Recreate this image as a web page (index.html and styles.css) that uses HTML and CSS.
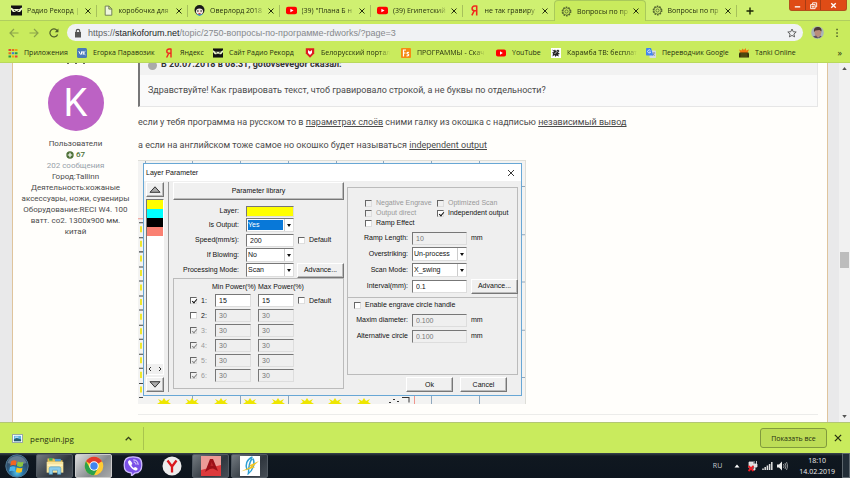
FILE: index.html
```html
<!DOCTYPE html>
<html lang="ru">
<head>
<meta charset="utf-8">
<title>Вопросы по программе RDWorks</title>
<link rel="stylesheet" href="styles.css">
</head>
<body>
<svg class="defs" width="0" height="0" aria-hidden="true">
  <symbol id="record" viewBox="0 0 11 10"><rect width="11" height="10" fill="#111"/><path d="M0 2l2.500 1.500h6L11 2v2L9 6.500H7.500L5.500 5.500 3.500 6.500H2L0 4z" fill="#eef8cf"/><path d="M2.500 4l2.200.8-1.200.8zM8.500 4l-2.200.8 1.200.8z" fill="#111"/></symbol>
  <symbol id="youtube" viewBox="0 0 10 10"><rect y="1.500" width="10" height="7" rx="1.800" fill="#f00"/><path d="M4 3.300v3.400L6.800 5z" fill="#fff"/></symbol>
  <symbol id="yandex" viewBox="0 0 10 10"><path d="M7 .5v9M7 1H5.200C3.300 1 2.800 2.300 2.800 3.200c0 1.300.9 2 2.200 2H7M4.800 5.200L2.600 9.500" fill="none" stroke="#f0281e" stroke-width="1.400"/></symbol>
  <symbol id="gear" viewBox="0 0 12 12"><circle cx="6" cy="6" r="4.600" fill="none" stroke="#54652f" stroke-width="1.500" stroke-dasharray="1.800 1.090"/><circle cx="6" cy="6" r="3.900" fill="none" stroke="#54652f" stroke-width=".8"/><circle cx="6" cy="6" r="1.700" fill="none" stroke="#54652f" stroke-width=".9"/></symbol>
  <symbol id="x" viewBox="0 0 8 8"><path d="M1.500 1.500l5 5M6.500 1.500l-5 5" fill="none" stroke="currentColor" stroke-width="1"/></symbol>
</svg>

<header class="browser">
  <nav class="tabs">
    <div class="tab"><svg class="fav"><use href="#record"/></svg><a href="#">Радио Рекорд |</a><button aria-label="Закрыть"><svg><use href="#x"/></svg></button></div>
    <div class="tab"><svg class="fav" viewBox="0 0 10 10"><path d="M2 1h3.500L8 3.500V9.300H2zM5.300 1v2.700H8" fill="#eef6dc" stroke="#687452" stroke-width=".8"/></svg><a href="#">коробочка для</a><button aria-label="Закрыть"><svg><use href="#x"/></svg></button></div>
    <div class="tab"><svg class="fav" viewBox="0 0 11 11"><circle cx="5.500" cy="5" r="5" fill="#181818"/><ellipse cx="5.500" cy="6.400" rx="3.600" ry="3" fill="#f4e5dc"/><circle cx="3.900" cy="6" r=".7"/><circle cx="7.100" cy="6" r=".7"/><path d="M2 9.500l3.500-1 3.500 1-3.500 1.500z" fill="#3697c4"/><path d="M4.500 8h2v1.500h-2z" fill="#db3d3d"/></svg><a href="#">Оверлорд 2018</a><button aria-label="Закрыть"><svg><use href="#x"/></svg></button></div>
    <div class="tab"><svg class="fav"><use href="#youtube"/></svg><a href="#">(39) "Плана Б н</a><button aria-label="Закрыть"><svg><use href="#x"/></svg></button></div>
    <div class="tab"><svg class="fav"><use href="#youtube"/></svg><a href="#">(39) Египетский</a><button aria-label="Закрыть"><svg><use href="#x"/></svg></button></div>
    <div class="tab plain"><svg class="fav"><use href="#yandex"/></svg><a href="#">не так гравиру</a><button aria-label="Закрыть"><svg><use href="#x"/></svg></button></div>
    <div class="tab active"><svg class="fav"><use href="#gear"/></svg><a href="#">Вопросы по пр</a><button aria-label="Закрыть"><svg><use href="#x"/></svg></button></div>
    <div class="tab"><svg class="fav"><use href="#gear"/></svg><a href="#">Вопросы по пр</a><button aria-label="Закрыть"><svg><use href="#x"/></svg></button></div>
    <button class="new-tab" aria-label="Новая вкладка"><svg viewBox="0 0 8 8"><path d="M4 .5v7M.5 4h7" stroke="#1b2406" stroke-width="1.400"/></svg></button>
    <div class="win">
      <button aria-label="Свернуть"><svg viewBox="0 0 10 10"><path d="M2 6.500h6" stroke="#fff" stroke-width="1.500"/></svg></button>
      <button aria-label="Восстановить"><svg viewBox="0 0 10 10"><path d="M4 3.500V2h4.500v4.500H7M1.800 4h5v4.500h-5zM3.500 5.800h1.700v1H3.500z" fill="none" stroke="#fff"/></svg></button>
      <button aria-label="Закрыть окно"><svg viewBox="0 0 10 10"><path d="M2.500 2.500l5 5M7.500 2.500l-5 5" stroke="#fff" stroke-width="1.500"/></svg></button>
    </div>
  </nav>

  <div class="toolbar">
    <button aria-label="Назад"><svg class="dim" viewBox="0 0 10 10"><path d="M9.500 5H1.200M5 1L1 5l4 4"/></svg></button>
    <button aria-label="Вперёд"><svg class="dim" viewBox="0 0 10 10"><path d="M.5 5h8.300M5 1l4 4-4 4"/></svg></button>
    <button aria-label="Обновить"><svg viewBox="0 0 10 10"><path d="M8.600 6.500A4 4 0 1 1 8 2.400L9 3.500"/><path d="M9.400.6v3.600H5.800z" fill="#4c5c28" stroke="none"/></svg></button>
    <div class="omnibox">
      <svg viewBox="0 0 10 10"><path d="M2 4h6v5.500H2z" fill="#555"/><path d="M3.300 4.500V3a1.700 1.700 0 0 1 3.400 0v1.500" fill="none" stroke="#555"/></svg>
      <div class="url" role="textbox" aria-label="Адрес"><span>https://</span><b>stankoforum.net</b>/topic/2750-вопросы-по-программе-rdworks/?page=3</div>
      <button aria-label="Закладка"><svg viewBox="0 0 10 10"><path d="M5 1l1.200 2.700 3 .3-2.300 2 .7 2.900L5 7.400 2.400 8.900 3.100 6 .8 4l3-.3z" fill="none" stroke="#555" stroke-width=".9"/></svg></button>
    </div>
    <button class="person" aria-label="Профиль"><svg viewBox="0 0 13 13"><circle cx="6.500" cy="6.500" r="6.300" fill="#a9b4b9"/><path d="M3 3.500C4 .5 9 .5 10 3.500l.3 3-1 3.500-3 1.500L4 9z" fill="#b98d7a"/><path d="M3 6C2.500 2 4.500 1 7 1s4 2 3.500 4.500L8.500 4l-4 .5z" fill="#4c3a38"/><path d="M2 10.500l3-1 2 2.300 2.500-2 1.200.7a6.300 6.300 0 0 1-8.700 0z" fill="#5b4c5c"/></svg></button>
    <button class="more" aria-label="Меню"><svg viewBox="0 0 10 10"><path d="M4.300.8h1.500v1.500H4.300zM4.300 4.200h1.500v1.500H4.300zM4.300 7.600h1.500v1.500H4.300z" fill="#4c5c28" stroke="none"/></svg></button>
  </div>

  <nav class="bookmarks">
    <a href="#"><svg viewBox="0 0 10 10"><path d="M.5 1H3v2H.5zM7 7.500h2.500v2H7z" fill="#e94335"/><path d="M3.800 1h2.500v2H3.800zM.5 4.200H3v2H.5z" fill="#e56d1f"/><path d="M7 1h2.500v2H7zM3.800 7.500h2.500v2H3.800z" fill="#efa20c"/><path d="M3.800 4.200h2.500v2H3.800z" fill="#3b77dc"/><path d="M7 4.200h2.500v2H7zM.5 7.500H3v2H.5z" fill="#269a4a"/></svg><span>Приложения</span></a>
    <a href="#"><svg viewBox="0 0 10 10"><rect width="10" height="10" rx="1.500" fill="#4a7ab8"/><path d="M1.800 3.200l1.500 3h1.200V3.400M4.500 4.800C5.500 4.800 6 3.200 6 3.200M6.200 3.300v3.500M8.400 3.300L6.400 5l2 1.800" fill="none" stroke="#fff" stroke-width="1"/></svg><span>Егорка Паравозик</span></a>
    <a href="#"><svg><use href="#yandex"/></svg><span>Яндекс</span></a>
    <a href="#"><svg><use href="#record"/></svg><span>Сайт Радио Рекорд</span></a>
    <a href="#"><svg viewBox="0 0 10 10"><path d="M.8.3h8.400v5.200L5 9.800.8 5.500z" fill="#df1b22"/><path d="M3 2v3l2 2 2-2V2L5 3.500z" fill="#fff"/></svg><span class="fade">Белорусский портал</span></a>
    <a href="#"><svg viewBox="0 0 10 10"><rect width="10" height="10" rx="1" fill="#f58a13"/><path d="M2.500 8.500V2H5M2.500 5h2M8 4.500C6 3.800 5.300 5.500 6.800 6s1 2-1.300 1.800" fill="none" stroke="#fff" stroke-width="1.200"/></svg><span class="fade">ПРОГРАММЫ - Скач</span></a>
    <a href="#"><svg><use href="#youtube"/></svg><span>YouTube</span></a>
    <a href="#"><svg viewBox="0 0 10 10"><rect width="10" height="10" fill="#fff"/><path d="M1 1.500l2 1 1-1 1 1.500 2-1.500L8.500 3 7 4.500 9 6 7 6.500l1 2-2.500-1-1 1.500-1-2-2 1.500.5-3L1 4.500l2-.5z" fill="#262626"/><path d="M3.500 6l3-3" stroke="#fff" stroke-width=".7"/></svg><span class="fade">Карамба ТВ: бесплат</span></a>
    <a href="#"><svg viewBox="0 0 10 10"><rect x="3.500" y="2.500" width="6.500" height="7.500" rx=".7" fill="#d7dce4"/><path d="M0 .7Q0 0 .7 0H5l2.300 7.500H.7Q0 7.500 0 6.800z" fill="#4385ef"/><path d="M4.500 2.700A1.500 1.500 0 1 0 4.600 4H3.300" fill="none" stroke="#fff" stroke-width=".8"/><path d="M6.700 5h2.500M8 4.300V5c0 1-.5 2-1.200 2.500M7.200 6l1.500 1.800" fill="none" stroke="#68738b" stroke-width=".6"/></svg><span>Переводчик Google</span></a>
    <a href="#"><svg viewBox="0 0 10 10"><path d="M0 1.500l2.500 1L3.500.5 5 2 7 0v2.500L10 1.500 8.500 5h-7z" fill="#ef7811"/><path d="M.5 4.500h9L10 6v3.500H0V6z" fill="#352f0b"/><path d="M1.500 6h7M1.500 8h7" stroke="#82871f" stroke-width=".6"/></svg><span>Tanki Online</span></a>
    <button aria-label="Другие закладки">»</button>
  </nav>
</header>

<main class="viewport">
  <article class="post">
    <aside class="author">
      <div class="name-tail"><i></i><i></i><i></i></div>
      <div class="avatar">K</div>
      <p>Пользователи</p>
      <p class="rep"><svg viewBox="0 0 8 8"><circle cx="4" cy="4" r="3.700" fill="#4d7037"/><path d="M4 1.800v4.400M1.800 4h4.400" stroke="#fff" stroke-width="1.200"/></svg>67</p>
      <p class="count">202 сообщения</p>
      <p>Город:Tallinn</p>
      <p>Деятельность:кожаные аксессуары, ножи, сувениры</p>
      <p>Оборудование:RECI W4. 100 ватт. co2. 1300x900 мм. китай</p>
    </aside>
    <section class="message">
      <blockquote>
        <div class="quote-head"><span class="dot"></span><b>В 20.07.2018 в 08:31, gotovsevegor сказал:</b></div>
        <p>Здравствуйте! Как гравировать текст, чтоб гравировало строкой, а не буквы по отдельности?</p>
      </blockquote>
      <p>если у тебя программа на русском то в <u>параметрах слоёв</u> сними галку из окошка с надписью <u>независимый вывод</u></p>
      <p>а если на английском тоже самое но окошко будет называться <u>independent output</u></p>

      <figure>
        <svg class="canvas" viewBox="0 0 388 243" preserveAspectRatio="none" aria-hidden="true">
          <rect width="388" height="243" fill="#f3f3f2"/>
          <path d="M0 .5h388M387.500 0v243" stroke="#deded8"/>
          <path d="M7.500 1v3M54.500 1v3M102.500 1v3M150.500 1v3M198.500 1v3M245.500 1v3M293.500 1v3M341.500 1v3M384 26.500h3M384 74.500h3M384 121.500h3M384 169.500h3M384 216.500h3M293.500 235v8M341.500 235v8M54.500 235v8M102.500 235v8M150.500 235v8" stroke="#8fa8be"/>
          <path d="M0 58.500h5M276.500 235v8" stroke="#ef958d"/>
          <path d="M1 62.500h4M1 77.500h4M1 91.500h4M1 106.500h4M1 120.500h4M1 135.500h4M1 149.500h4M1 164.500h4M1 178.500h4M1 193.500h4M1 207.500h4M1 222.500h4M1 236.500h4" stroke="#43484a"/>
          <path d="M3 66v170" stroke="#eee72d" stroke-width="2" stroke-dasharray="6 8.500"/>
          <path id="spark" d="M20 238l4 2 2-3 2 3 4-2-2 3 3 2H19l3-2z" fill="#eee600"/>
          <use href="#spark" x="28"/><use href="#spark" x="57"/><use href="#spark" x="86"/><use href="#spark" x="114"/><use href="#spark" x="143"/><use href="#spark" x="171"/><use href="#spark" x="200"/>
          <path d="M251 241.500h2M255 238.500h2M259 240.500h2M264 236.500h7v5" fill="none" stroke="#333"/>
        </svg>

        <form class="dialog">
          <div class="title"><span>Layer Parameter</span><button type="button" aria-label="Close"><svg viewBox="0 0 8 8"><path d="M1 1l6 6M7 1L1 7" stroke="#222" stroke-width=".9"/></svg></button></div>
          <div class="work">
            <div class="strip">
              <button type="button" class="btn" aria-label="Up"><svg viewBox="0 0 12 7"><path d="M1 6.300L6 .8l5 5.500z" fill="#aaa" stroke="#222" stroke-width=".9"/></svg></button>
              <div class="layers"><i class="yellow"></i><i class="cyan"></i><i class="black"></i><i class="salmon"></i><span class="arrows"><svg viewBox="0 0 16 6"><path d="M4 1L2 3l2 2M12 1l2 2-2 2" fill="none" stroke="#333"/></svg></span></div>
              <button type="button" class="btn" aria-label="Down"><svg viewBox="0 0 12 7"><path d="M1 .7L6 6.200 11 .7z" fill="#aaa" stroke="#222" stroke-width=".9"/></svg></button>
            </div>
            <div class="left">
              <button type="button" class="btn library">Parameter library</button>
              <div class="basic">
                <label>Layer:</label><span class="swatch"></span><span></span>
                <label for="out">Is Output:</label><span class="combo"><select id="out" class="picked"><option>Yes</option></select></span><span></span>
                <label for="speed">Speed(mm/s):</label><input id="speed" type="text" value="200"><label class="check"><input type="checkbox">Default</label>
                <label for="blow">If Blowing:</label><span class="combo"><select id="blow"><option>No</option></select></span><span></span>
                <label for="mode">Processing Mode:</label><span class="combo"><select id="mode"><option>Scan</option></select></span><button type="button" class="btn">Advance...</button>
              </div>
              <div class="power">
                <span></span><span class="head">Min Power(%)</span><span class="head">Max Power(%)</span><span></span>
                <label class="check"><input type="checkbox" checked>1:</label><input type="text" value="15" aria-label="Min 1"><input type="text" value="15" aria-label="Max 1"><label class="check"><input type="checkbox">Default</label>
                <label class="check"><input type="checkbox">2:</label><input type="text" value="30" disabled aria-label="Min 2"><input type="text" value="30" disabled aria-label="Max 2"><span></span>
                <label class="check off"><input type="checkbox" checked disabled>3:</label><input type="text" value="30" disabled aria-label="Min 3"><input type="text" value="30" disabled aria-label="Max 3"><span></span>
                <label class="check off"><input type="checkbox" checked disabled>4:</label><input type="text" value="30" disabled aria-label="Min 4"><input type="text" value="30" disabled aria-label="Max 4"><span></span>
                <label class="check off"><input type="checkbox" checked disabled>5:</label><input type="text" value="30" disabled aria-label="Min 5"><input type="text" value="30" disabled aria-label="Max 5"><span></span>
                <label class="check off"><input type="checkbox" checked disabled>6:</label><input type="text" value="30" disabled aria-label="Min 6"><input type="text" value="30" disabled aria-label="Max 6"><span></span>
              </div>
            </div>
            <div class="right">
              <div class="options">
                <div class="flags">
                  <label class="check off"><input type="checkbox" disabled>Negative Engrave</label><label class="check off"><input type="checkbox" disabled>Optimized Scan</label>
                  <label class="check off"><input type="checkbox" disabled>Output direct</label><label class="check"><input type="checkbox" checked>Independent output</label>
                  <label class="check"><input type="checkbox">Ramp Effect</label>
                </div>
                <div class="fields">
                  <label for="ramp">Ramp Length:</label><input id="ramp" type="text" value="10" disabled><span>mm</span>
                  <label for="over">Overstriking:</label><span class="combo"><select id="over"><option>Un-process</option></select></span><span></span>
                  <label for="scan">Scan Mode:</label><span class="combo"><select id="scan"><option>X_swing</option></select></span><span></span>
                  <label for="interval">Interval(mm):</label><input id="interval" type="text" value="0.1"><button type="button" class="btn">Advance...</button>
                </div>
                <div class="circle">
                  <label class="check"><input type="checkbox">Enable engrave circle handle</label>
                  <div class="fields">
                    <label for="maxd">Maxim diameter:</label><input id="maxd" type="text" value="0.100" disabled><span>mm</span>
                    <label for="alt">Alternative circle</label><input id="alt" type="text" value="0.100" disabled><span>mm</span>
                  </div>
                </div>
              </div>
              <div class="actions"><button type="button" class="btn">Ok</button><button type="button" class="btn">Cancel</button></div>
            </div>
          </div>
        </form>
      </figure>
      <hr>
    </section>
  </article>
  <div class="scrollbar"><svg viewBox="0 0 6 4"><path d="M0 4l3-4 3 4z" fill="#555"/></svg><span class="thumb"></span><svg viewBox="0 0 6 4"><path d="M0 0l3 4 3-4z" fill="#555"/></svg></div>
</main>

<footer class="downloads">
  <div class="file"><svg viewBox="0 0 12 10"><rect x=".5" y=".5" width="11" height="9" fill="#fff" stroke="#91a1a6"/><path d="M2 2h8v6H2z" fill="#5ab2e4"/><path d="M2 6l3-1.500L10 6v2H2z" fill="#265d70"/><path d="M3 3h4v1H3z" fill="#eef"/></svg><a href="#">penguin.jpg</a><button aria-label="Действия"><svg viewBox="0 0 8 8"><path d="M1.500 5.500L4 3l2.500 2.500" fill="none" stroke="#34411a" stroke-width="1.200"/></svg></button></div>
  <button class="show-all">Показать все</button>
  <button class="close" aria-label="Закрыть панель"><svg><use href="#x"/></svg></button>
</footer>

<nav class="taskbar">
  <button aria-label="Пуск"><svg viewBox="0 0 24 24"><defs><radialGradient id="orb" cy=".8"><stop stop-color="#55c4e8"/><stop offset=".6" stop-color="#256b9c"/><stop offset="1" stop-color="#31506c"/></radialGradient></defs><circle cx="12" cy="12" r="11.200" fill="url(#orb)" stroke="#4e7893"/><path d="M2.500 9A10 10 0 0 1 21.500 9Q12 12 2.500 9z" fill="#fff" opacity=".25"/><path d="M6 7.500q3-2 5.500-.5l-.8 4.600q-2.600-1.400-5.400.2z" fill="#f26522"/><path d="M12.700 7.500q2.600 1.500 5.800.2l-.8 4.600q-3 1.300-5.800-.2z" fill="#8cc63f"/><path d="M5 13q2.800-1.600 5.500-.2l-.8 4.600q-2.700-1.500-5.500 0z" fill="#4ab4ee"/><path d="M11.700 13.500q2.800 1.500 5.800.2l-.8 4.400q-3 1.300-5.800-.2z" fill="#fdc51a"/></svg></button>
  <button class="open" aria-label="Проводник"><svg viewBox="0 0 24 22"><path d="M3 2h8l1.500 2H21v14H3z" fill="#e3bb52"/><path d="M5 1.500h4v3H5z" fill="#3daa50"/><path d="M12 2.500h7v3h-7z" fill="#4e9ed8"/><path d="M2 6h20v13H2z" fill="#f8e49b"/><path d="M3 9h18v2H3z" fill="#fff3c2"/><path d="M5 21v-7q0-2 2-2h10q2 0 2 2v7h-4v-5H9v5z" fill="#8accea" stroke="#4b9ac5" stroke-width=".7"/></svg></button>
  <button class="open current" aria-label="Chrome"><svg viewBox="0 0 20 20"><circle cx="10" cy="10" r="9.300" fill="#fc3"/><path d="M10 10L1.950 5.350A9.300 9.300 0 0 1 18.050 5.350z" fill="#e33b2e"/><path d="M1.950 5.350A9.300 9.300 0 0 0 10 19.300L13.900 12.300 6.100 12.300z" fill="#2ba14b"/><circle cx="10" cy="10" r="4.700" fill="#fff"/><circle cx="10" cy="10" r="3.700" fill="#4284f0"/></svg></button>
  <button aria-label="Viber"><svg viewBox="0 0 20 20"><path d="M10 .8c6.500 0 8.800 2 8.800 8.200s-2.600 8-7 8.200L8.500 20v-3C3 16.300 1.200 14.500 1.200 9S3.500.8 10 .8z" fill="#7a51e8" stroke="#cdbcfc" stroke-width="1.300"/><path d="M6.300 4.300c-2 1-1.300 3 .2 5.200 1.800 2.700 3.500 4.200 5.800 5 1.200.3 2-.5 2.400-1.500.2-.8-2-2.200-2.800-2.100l-1 1c-1-.3-2.400-2-2.600-3l1-1c.2-.8-1.800-3.900-3-3.600z" fill="#fff"/><path d="M10.300 3.900c3.200 0 4.800 1.800 4.800 4.900M10.700 6c1.500.1 2.200 1 2.300 2.500" fill="none" stroke="#fff" stroke-width=".9"/></svg></button>
  <button aria-label="Яндекс"><svg viewBox="0 0 20 20"><circle cx="10" cy="10" r="9.500" fill="#ececec"/><path d="M5.500 4.500L10 10.500l4.500-6M10 10v6.500" fill="none" stroke="#d9181e" stroke-width="2.300"/></svg></button>
  <button class="open" aria-label="AutoCAD"><svg viewBox="0 0 20 20"><rect width="20" height="20" fill="#dd3a3c"/><path d="M0 0h20v9L0 14z" fill="#ed9a96"/><path d="M4 16L9 3h3l5 12-5-2.500-3 .5z" fill="#9c1018"/><path d="M9.500 10l1-4 2 4z" fill="#b9262b"/></svg></button>
  <button class="open" aria-label="RDWorks"><svg viewBox="0 0 20 20"><rect width="20" height="20" fill="#fff"/><path d="M12.500 1C6.500 3.500 5 9 7 14M13 2.500c2.500 5 0 12-5.500 16M12 2.500C9 7 8.500 11 8.500 17" fill="none" stroke="#2d9fd4" stroke-width="1.500"/><path d="M1 15.500L11 10.500l-2-1L19 5l-6 5.500 2 1z" fill="#efc52a"/></svg></button>
  <div class="tray">
    <span class="lang">RU</span>
    <svg viewBox="0 0 12 12"><path d="M3.500 7.500L6 4.500l2.500 3z" fill="#fff"/></svg>
    <svg viewBox="0 0 12 12"><path d="M3 2h4v6H3zM8 1v3M10.500 1v3M7.500 4H11v3H8zM9 7v3H6" fill="#ddd" stroke="#eee" stroke-width=".8"/><path d="M2.500 6l5 5M7.500 6l-5 5" stroke="#ed1c24" stroke-width="1.800"/></svg>
    <svg viewBox="0 0 12 12"><path d="M2 10V8.500M4.200 10V7M6.400 10V5.500M8.600 10V4M10.800 10V2" stroke="#e2e2e2" stroke-width="1.500"/></svg>
    <svg viewBox="0 0 12 12"><path d="M1 4.500h2L6 1.500v9l-3-3H1z" fill="#eee"/><path d="M7.500 4q1.200 2 0 4M9 3q2 3 0 6M10.500 2q2.500 4 0 8" fill="none" stroke="#ccc" stroke-width=".7"/></svg>
    <time>18:10<br>14.02.2019</time>
    <button class="desktop" aria-label="Показать рабочий стол"></button>
  </div>
</nav>
</body>
</html>
```
FILE: styles.css
```css
* { box-sizing: border-box; }

html, body { height: 100%; }

body {
  margin: 0;
  display: flex;
  flex-direction: column;
  overflow: hidden;
  font-family: "Open Sans", "Noto Sans", sans-serif;
  font-size: 7px;
  color: #333;
}

button, input, select {
  font: inherit;
  color: inherit;
  margin: 0;
  padding: 0;
  border: 0;
  background: none;
  border-radius: 0;
}

button {
  display: flex;
  align-items: center;
  justify-content: center;
}

a { color: inherit; text-decoration: none; }
p { margin: 0; }
svg { display: block; flex: none; }
.defs { position: absolute; }

/* Browser frame */
.browser { flex: none; background: #c9eb5d; color: #263010; }

.tabs {
  display: grid;
  grid-template-columns: repeat(8, 1fr) 25px 88px;
  height: 21px;
  padding-left: 5px;
  background: #cff071;
  border-bottom: 1px solid #b0ce5f;
}

.tab {
  display: flex;
  align-items: center;
  min-width: 0;
  height: 21px;
  padding: 0 5px 0 6px;
  position: relative;
}

.tab::after {
  content: "";
  position: absolute;
  right: 0;
  top: 5px;
  height: 12px;
  border-right: 1px solid #a6c15b;
}

.tab.plain::after { display: none; }

.tab.active {
  background: #c9eb5d;
  border: 1px solid #a9c95b;
  border-bottom: 0;
  border-radius: 4px 4px 0 0;
}

.tab.active::after { display: none; }
.fav { width: 11px; height: 11px; margin-right: 5px; }

.tab a {
  flex: 1;
  overflow: hidden;
  white-space: nowrap;
  -webkit-mask-image: linear-gradient(90deg, #000 80%, transparent);
  mask-image: linear-gradient(90deg, #000 80%, transparent);
}

.tab button { margin-left: 2px; }
.tab button svg { width: 8px; height: 8px; }
.new-tab svg { width: 8px; height: 8px; }

.win {
  display: flex;
  justify-self: end;
  margin-right: 3px;
  height: 11px;
  background: #df4c16;
  border: 1px solid #b3501d;
  border-top: 0;
  border-radius: 0 0 3px 3px;
}

.win button { width: 15px; }
.win button + button { border-left: 1px solid #a73c14; }
.win button:last-child { width: 26px; }
.win svg { width: 9px; height: 9px; }

.toolbar {
  display: flex;
  align-items: center;
  height: 23px;
  padding-left: 9px;
}

.toolbar svg { width: 10px; height: 10px; fill: none; stroke: #4c5c28; stroke-width: 1.2; }
.toolbar svg.dim { stroke: #8ba34a; }
.toolbar > button { margin-right: 10px; }

.omnibox {
  flex: 1;
  display: flex;
  align-items: center;
  gap: 5px;
  height: 17px;
  padding: 0 6px;
  margin-right: 8px;
  margin-left: -2px;
  border-radius: 9px;
  background: #f0f2f4;
}

.omnibox svg { stroke: none; }
.url { flex: 1; font-family: "Liberation Sans", sans-serif; font-size: 9px; color: #86898c; }
.url span { color: #606468; }
.url b { font-weight: 400; color: #202225; }
.toolbar > .person { margin-right: 8px; }
.toolbar .person svg { width: 13px; height: 13px; stroke: none; }
.toolbar > .more { margin-right: 8px; }

.bookmarks {
  display: grid;
  grid-template-columns: 69px 87px 49px 92px 96px 95px 55px 95px 93px 80px 1fr;
  align-items: center;
  height: 19px;
  padding: 0 8px 1px 8px;
  border-bottom: 1px solid #b9d95b;
}

.bookmarks a { display: flex; align-items: center; gap: 6px; padding-right: 4px; white-space: nowrap; }
.bookmarks svg { width: 10px; height: 10px; }
.bookmarks span { overflow: hidden; }
.bookmarks button { justify-self: end; font-size: 9px; }

.fade {
  -webkit-mask-image: linear-gradient(90deg, #000 85%, transparent);
  mask-image: linear-gradient(90deg, #000 85%, transparent);
}

/* Forum page */
.viewport {
  flex: 1;
  min-height: 0;
  display: flex;
  overflow: hidden;
  background: #e9e9ea;
  font-family: Roboto, sans-serif;
  font-size: 8px;
  color: #4b4b4b;
}

.post {
  flex: 1;
  display: flex;
  margin: 0 11px 0 12px;
  border: solid #dfc49c;
  border-width: 0 1px;
  background: #fffefb;
}

.author {
  flex: none;
  width: 125px;
  padding: 0 8px;
  text-align: center;
  line-height: 11px;
}

.name-tail { display: flex; justify-content: center; gap: 6px; height: 12px; }
.name-tail i { width: 2px; height: 1px; background: #666; }

.avatar {
  width: 56px;
  height: 56px;
  margin: 0 auto 7px;
  border-radius: 50%;
  background: #bc62c4;
  color: #fff;
  font-size: 38px;
  line-height: 56px;
}

.rep { display: flex; align-items: center; justify-content: center; gap: 2px; color: #4d7037; font-weight: 500; }
.rep svg { width: 8px; height: 8px; }
.count { color: #97a1a9; }

.message { flex: 1; min-width: 0; padding: 0 9px 0 0; font-size: 9px; line-height: 12px; }
.message > p { margin-bottom: 11px; }

blockquote {
  margin: 0 0 9px;
  border: 1px solid #e6e6e6;
  border-top: 0;
  border-left: 2px solid #777;
  background: #fafafa;
}

.quote-head { display: flex; align-items: flex-end; gap: 4px; height: 12px; padding: 0 8px 5px; background: #f2f2f2; color: #333; }
.dot { width: 9px; height: 9px; border-radius: 50%; background: #aaa; }
blockquote p { padding: 9px 8px 10px; }

figure {
  position: relative;
  width: 388px;
  margin: -2px 0 10px;
  padding: 3px 4px 8px 5px;
}

.canvas { position: absolute; inset: 0; width: 100%; height: 100%; }
hr { border: 0; border-top: 1px solid #ececea; margin: 0; }

.scrollbar {
  width: 11px;
  display: flex;
  flex-direction: column;
  align-items: center;
  justify-content: space-between;
  padding: 4px 0;
  background: #f1f1f1;
}

.scrollbar svg { width: 5px; height: 3px; }
.thumb { width: 9px; height: 16px; margin-top: 34px; background: #bdbdbd; }

/* Layer dialog */
.dialog {
  position: relative;
  border: 1px solid #68a7d5;
  background: #efefef;
  font: 7px/10px "Liberation Sans", sans-serif;
  color: #111;
}

.title { display: flex; justify-content: space-between; align-items: center; height: 17px; padding: 0 6px 0 2px; background: #fff; }
.title svg { width: 8px; height: 8px; }

.work { display: flex; padding: 1px 4px 3px 2px; }

.btn {
  height: 15px;
  background: #f0f0f0;
  border: 1px solid;
  border-color: #fff #777 #777 #fff;
  box-shadow: inset -1px -1px #bbb;
  line-height: 10px;
  white-space: nowrap;
}

.strip { display: flex; flex-direction: column; gap: 2px; width: 20px; }
.strip .btn svg { width: 12px; height: 7px; }

.layers {
  flex: 1;
  display: flex;
  flex-direction: column;
  border: 1px solid;
  border-color: #777 #fff #fff #777;
  background: #fff;
}

.layers i { height: 9px; }
.yellow, .swatch { background: #ff0; }
.cyan { background: #0ff; }
.black { background: #000; }
.salmon { background: #fa8072; }
.arrows { margin-top: auto; height: 10px; background: #f0f0f0; display: flex; align-items: center; justify-content: center; }
.arrows svg { width: 16px; height: 6px; }

.left {
  width: 176px;
  margin-left: 4px;
  padding-left: 4px;
  border-left: 1px solid #999;
}

.library { width: 100%; height: 18px; }

.basic {
  display: grid;
  grid-template-columns: 70px 48px 47px;
  grid-template-rows: 12px 14px 14px 14px 14px;
  row-gap: 1px;
  column-gap: 3px;
  align-items: center;
  padding: 5px 0 1px;
}

.basic > label:not(.check), .fields > label { text-align: right; white-space: nowrap; }
.basic > label:not(.check) { padding-right: 4px; }
.basic .check { padding-left: 1px; }

input[type="text"], .combo, .swatch {
  width: 100%;
  height: 13px;
  border: 1px solid;
  border-color: #777 #ddd #ddd #777;
}

input[type="text"], .combo { background: #fff; padding-left: 3px; min-width: 0; }
input[type="text"]:disabled { background: #efefef; color: #777; }
.swatch { height: 11px; }

.combo { display: flex; position: relative; height: 14px; padding: 1px; }
.combo select { flex: 1; min-width: 0; margin-right: 9px; appearance: none; line-height: 10px; outline: 0; }
.combo .picked { background: #0878d8; color: #fff; }

.combo::after {
  content: "";
  position: absolute;
  right: 2px;
  top: 5px;
  border: solid transparent;
  border-width: 3px 2px 0;
  border-top-color: #111;
}

.combo::before {
  content: "";
  position: absolute;
  right: 8px;
  top: 0;
  bottom: 0;
  border-right: 1px solid #ccc;
}

.check { display: flex; align-items: center; gap: 4px; white-space: nowrap; }
.off { color: #999; }

input[type="checkbox"] {
  appearance: none;
  flex: none;
  position: relative;
  width: 7px;
  height: 7px;
  border: 1px solid;
  border-color: #666 #ddd #ddd #666;
  background: #fff;
}

input[type="checkbox"]:disabled { background: #f0f0f0; }

input[type="checkbox"]:checked::after {
  content: "";
  position: absolute;
  left: 2px;
  top: 0;
  width: 2px;
  height: 4px;
  border: solid #111;
  border-width: 0 1px 1px 0;
  transform: rotate(40deg);
}

input[type="checkbox"]:disabled:checked::after { border-color: #888; }

.power {
  display: grid;
  grid-template-columns: 25px 43px 40px 42px;
  grid-template-rows: 11px repeat(6, 13px);
  row-gap: 2px;
  align-items: center;
  height: 111px;
  padding: 2px 0 0 16px;
  border: 1px solid #bbb;
}

.power input[type="text"] { width: 36px; }
.head { white-space: nowrap; }
.power .head:nth-child(2) { margin-left: -3px; }

.right { flex: 1; margin-left: 3px; }

.options {
  height: 188px;
  margin-top: 5px;
  padding: 10px 0 0;
  border: 1px solid #bbb;
}

.flags {
  display: grid;
  grid-template-columns: 72px 1fr;
  padding-left: 17px;
}

.fields {
  display: grid;
  grid-template-columns: 60px 55px 46px;
  grid-auto-rows: 14px;
  row-gap: 2px;
  column-gap: 4px;
  align-items: center;
  padding-top: 3px;
}

.fields .btn { margin-right: -1px; }

.circle { margin-top: 4px; border-top: 1px solid #bbb; padding-top: 2px; }
.circle > .check { padding-left: 6px; }

.actions { display: flex; justify-content: flex-end; gap: 7px; padding: 2px 11px 0 0; }
.actions .btn { width: 47px; }

/* Download shelf */
.downloads {
  flex: none;
  display: flex;
  align-items: center;
  height: 31px;
  padding-right: 7px;
  background: #c9eb5d;
  border-top: 1px solid #b3c675;
  color: #263010;
}

.file { display: flex; align-items: center; width: 144px; height: 23px; padding: 0 10px 0 12px; border-right: 1px solid #a8c44e; }
.file svg { width: 11px; height: 9px; }
.file a { flex: 1; margin-left: 7px; font-size: 8px; }
.file button svg { width: 9px; height: 9px; }
.show-all { margin-left: auto; width: 67px; height: 20px; border: 1px solid #819a3d; border-radius: 3px; background: #bddd57; }
.close { margin-left: 6px; }
.close svg { width: 10px; height: 10px; }

/* Taskbar */
.taskbar {
  flex: none;
  display: flex;
  align-items: center;
  gap: 2px;
  height: 25px;
  background: linear-gradient(#3b464d, #101820 3px, #0d151e);
  color: #eee;
}

.taskbar > button { width: 37px; height: 24px; }
.taskbar > button svg { width: 20px; height: 20px; }
.taskbar > button:first-child { width: 34px; }
.taskbar > button:first-child svg { width: 24px; height: 24px; }
.taskbar .open { border: 1px solid #525a62; border-radius: 2px; background: linear-gradient(135deg, #737a80, #30373f 60%, #464d55); }
.taskbar .current { background: linear-gradient(135deg, #ddd, #858a8e 60%, #aaa); border-color: #ccc; }

.tray { display: flex; align-items: center; gap: 3px; margin-left: auto; height: 100%; }
.tray svg { width: 12px; height: 12px; }
.lang { margin-right: 6px; color: #c8ccd0; }
.tray time { margin-left: 8px; text-align: center; line-height: 11px; }
.tray .desktop { width: 8px; height: 100%; margin-left: 4px; border: 1px solid #5d666d; background: #222d37; }
```
